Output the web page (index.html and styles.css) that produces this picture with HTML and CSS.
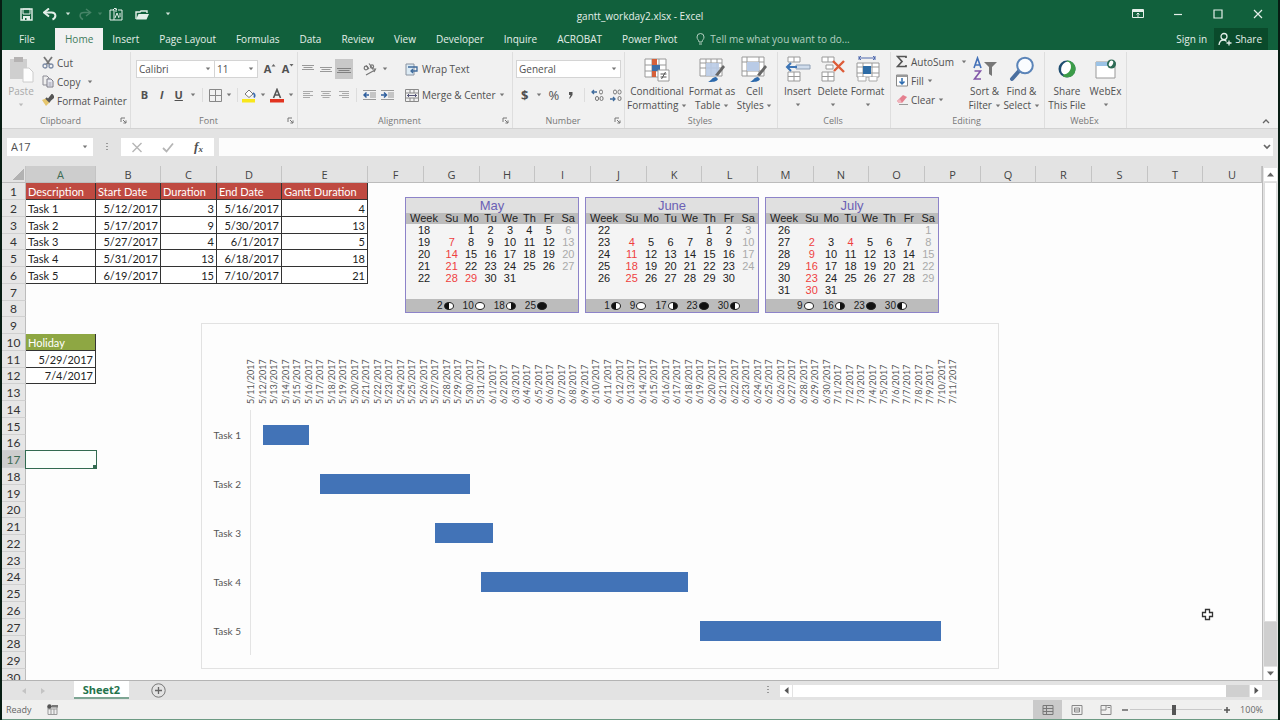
FILE: index.html
```html
<!DOCTYPE html>
<html lang="en">
<head>
<meta charset="utf-8">
<title>gantt_workday2.xlsx - Excel</title>
<link rel="stylesheet" href="styles.css">
</head>
<body>
<svg class="defs" aria-hidden="true">
  <symbol id="caret" viewBox="0 0 6 4"><path d="M0.8 0.5h4.4L3 3.2z" fill="currentColor"/></symbol>
  <symbol id="launcher" viewBox="0 0 7 7"><path d="M1 5V1h4M3 3l3 3M6 3.4V6H3.4" fill="none" stroke="#777"/></symbol>
</svg>
<div class="window">
  <header class="titlebar">
    <div class="quick">
      <button class="q" aria-label="Save"><svg width="13" height="13" viewBox="0 0 13 13"><path d="M1 1h11v11H1z" fill="none" stroke="currentColor" stroke-width="1.4"/><path d="M3 1h7v5H3z" fill="none" stroke="currentColor"/><path d="M3 8h7v4H3z" fill="currentColor"/><path d="M5 10h1.500v2H5z" fill="#11603c"/></svg></button>
      <button class="q" aria-label="Undo"><svg width="14" height="13" viewBox="0 0 14 13"><path d="M2 4.500h6.500c5 0 5 5.500 1 7" fill="none" stroke="currentColor" stroke-width="2"/><path d="M6 0.500L1 4.500l5 4" fill="none" stroke="currentColor" stroke-width="2"/></svg></button>
      <button class="q arrow" aria-label="Undo history"><svg class="caret"><use href="#caret"/></svg></button>
      <button class="q dim" aria-label="Redo"><svg width="14" height="13" viewBox="0 0 14 13"><path d="M12 4.500H6c-5 0-5 5-1 7" fill="none" stroke="currentColor" stroke-width="1.500"/><path d="M8 1l4.500 3.500L8 8" fill="none" stroke="currentColor" stroke-width="1.500"/></svg></button>
      <button class="q arrow dim" aria-label="Redo history"><svg class="caret"><use href="#caret"/></svg></button>
      <button class="q" aria-label="Paste special"><svg width="14" height="14" viewBox="0 0 14 14"><path d="M1 3h4v10H1zM5 13h8V3H9" fill="none" stroke="currentColor"/><path d="M4 3l2-2 2 2M7 1v4M6 11l2-5 2 5M11 6v4" fill="none" stroke="currentColor"/></svg></button>
      <button class="q" aria-label="Open"><svg width="14" height="11" viewBox="0 0 14 11"><path d="M1 10V3h4l1-1h6v2" fill="none" stroke="currentColor" stroke-width="1.400"/><path d="M3.500 5H14l-2.500 5.500H1z" fill="currentColor"/></svg></button>
      <button class="q arrow" aria-label="Customize toolbar"><svg class="caret"><use href="#caret"/></svg></button>
    </div>
    <h1 class="doc">gantt_workday2.xlsx - Excel</h1>
    <div class="winctl">
      <button aria-label="Ribbon display options"><svg width="12" height="10" viewBox="0 0 12 10"><path d="M.5.500h11v8H.5z" fill="none" stroke="currentColor"/><path d="M1 1h10v2H1z" fill="currentColor"/><path d="M6 8V4M4.500 5.500L6 4l1.500 1.500" fill="none" stroke="currentColor"/></svg></button>
      <button aria-label="Minimize"><svg width="10" height="10" viewBox="0 0 10 10"><path d="M1 5.500h8" stroke="currentColor" stroke-width="1.200"/></svg></button>
      <button aria-label="Maximize"><svg width="10" height="10" viewBox="0 0 10 10"><path d="M1 1h8v8H1z" fill="none" stroke="currentColor" stroke-width="1.200"/></svg></button>
      <button aria-label="Close"><svg width="10" height="10" viewBox="0 0 10 10"><path d="M1 1l8 8M9 1L1 9" stroke="currentColor" stroke-width="1.200"/></svg></button>
    </div>
  </header>
  <nav class="tabs">
    <button class="tab file">File</button>
    <button class="tab active">Home</button>
    <button class="tab">Insert</button>
    <button class="tab">Page Layout</button>
    <button class="tab">Formulas</button>
    <button class="tab">Data</button>
    <button class="tab">Review</button>
    <button class="tab">View</button>
    <button class="tab">Developer</button>
    <button class="tab">Inquire</button>
    <button class="tab">ACROBAT</button>
    <button class="tab">Power Pivot</button>
    <button class="tell"><svg width="9" height="13" viewBox="0 0 9 13"><path d="M3 9C3 7 1 6.500 1 4a3.500 3.500 0 0 1 7 0C8 6.500 6 7 6 9zM3 11h3" fill="none" stroke="currentColor"/></svg>Tell me what you want to do...</button>
    <button class="signin">Sign in</button>
    <button class="share"><svg width="14" height="14" viewBox="0 0 14 14"><circle cx="6" cy="4.500" r="3" fill="none" stroke="currentColor" stroke-width="1.300"/><path d="M1 13c.3-3 2-5 4.500-5 1.500 0 2.500.6 3 1.500M8.500 11h5M11 8.500v5" fill="none" stroke="currentColor" stroke-width="1.300"/></svg>Share</button>
  </nav>

  <section class="ribbon">
    <div class="group g-clip">
      <div class="body">
        <button class="big off"><svg width="26" height="27" viewBox="0 0 26 27"><path d="M2 3h17v20H2z" fill="#cfcfcf"/><path d="M6 1h9v5H6z" fill="#b5b3b3"/><path d="M15 12h6l4 4v10H15z" fill="#fdfdfd" stroke="#ccc"/></svg><span>Paste</span><svg class="caret"><use href="#caret"/></svg></button>
        <div class="stack">
          <button class="sm"><svg width="12" height="13" viewBox="0 0 12 13"><path d="M2 1l6 8M10 1L4 9" stroke="#777" stroke-width="1.800"/><circle cx="3" cy="10" r="2" fill="none" stroke="#7d8ca6" stroke-width="1.300"/><circle cx="9" cy="10" r="2" fill="none" stroke="#7d8ca6" stroke-width="1.300"/></svg>Cut</button>
          <button class="sm"><svg width="12" height="13" viewBox="0 0 12 13"><path d="M1 1h4l2 2v7H1z" fill="#eee" stroke="#8b8b94"/><path d="M5 4h4l2 2v6H5z" fill="#e8eaf2" stroke="#7d7d88"/><path d="M6.500 8h3M6.500 10h3" stroke="#99a"/></svg>Copy<svg class="caret far"><use href="#caret"/></svg></button>
          <button class="sm"><svg width="12" height="13" viewBox="0 0 12 13"><path d="M0 6l5-2 3 4-4 4z" fill="#e6c66e"/><path d="M4 4l4 4M6 6l4-5 1.500 2L7 7" stroke="#555" stroke-width="2" fill="#555"/></svg>Format Painter</button>
        </div>
      </div>
      <div class="cap">Clipboard<svg class="launch"><use href="#launcher"/></svg></div>
    </div>

    <div class="group g-font">
      <div class="rows">
        <div class="row">
          <label class="pick face"><select aria-label="Font"><option>Calibri</option></select><svg class="caret"><use href="#caret"/></svg></label>
          <label class="pick size"><select aria-label="Font size"><option>11</option></select><svg class="caret"><use href="#caret"/></svg></label>
          <button class="ic first" aria-label="Increase font size"><b class="gl">A</b><svg width="5" height="12" viewBox="0 0 5 12"><path d="M.5 3.500l2-2.500 2 2.500z" fill="#666"/></svg></button>
          <button class="ic" aria-label="Decrease font size"><b class="gl">A</b><svg width="5" height="12" viewBox="0 0 5 12"><path d="M.5 1l2 2.500 2-2.500z" fill="#666"/></svg></button>
        </div>
        <div class="row">
          <button class="ic"><b class="gl">B</b></button>
          <button class="ic"><b class="gl"><i>I</i></b></button>
          <button class="ic"><b class="gl"><u>U</u></b></button>
          <button class="dd" aria-label="Underline style"><svg class="caret"><use href="#caret"/></svg></button>
          <i class="bar"></i>
          <button class="ic" aria-label="Borders"><svg width="13" height="13" viewBox="0 0 13 13"><path d="M.5.500h12v12H.5zM6.500.500v12M.5 6.500h12" fill="none" stroke="#888"/></svg></button>
          <button class="dd" aria-label="Border style"><svg class="caret"><use href="#caret"/></svg></button>
          <i class="bar"></i>
          <button class="ic" aria-label="Fill color"><svg width="14" height="15" viewBox="0 0 14 15"><path d="M3 6l4-4 4 4-4 3.500z" fill="#fff" stroke="#777"/><path d="M11 5c2 1 2 3 1 4.500" fill="none" stroke="#3c6db0" stroke-width="1.800"/><path d="M0 11h13v3.500H0z" fill="#f8e71c"/></svg></button>
          <button class="dd" aria-label="Fill choices"><svg class="caret"><use href="#caret"/></svg></button>
          <button class="ic" aria-label="Font color"><svg width="14" height="15" viewBox="0 0 14 15"><path d="M3.500 10L7 1.500l3.500 8.500M4.800 7h4.400" fill="none" stroke="#555" stroke-width="1.600"/><path d="M0 11h14v3.500H0z" fill="#e23420"/></svg></button>
          <button class="dd" aria-label="Color choices"><svg class="caret"><use href="#caret"/></svg></button>
        </div>
      </div>
      <div class="cap">Font<svg class="launch"><use href="#launcher"/></svg></div>
    </div>

    <div class="group g-align">
      <div class="rows">
        <div class="row">
          <div class="seg">
            <button class="ic" aria-label="Top align"><svg width="12" height="12" viewBox="0 0 12 12"><path d="M0 2.500h12M1.500 4.500h9M0 6.500h12" stroke="#999"/></svg></button>
            <button class="ic" aria-label="Middle align"><svg width="12" height="12" viewBox="0 0 12 12"><path d="M0 4.500h12M1.500 6.500h9M0 8.500h12" stroke="#999"/></svg></button>
            <button class="ic on" aria-label="Bottom align"><svg width="14" height="14" viewBox="0 0 14 14"><path d="M0 6.500h14M1.500 8.500h11M0 10.500h14" stroke="#808080"/></svg></button>
            <button class="ic gap" aria-label="Orientation"><svg width="14" height="13" viewBox="0 0 14 13"><circle cx="3" cy="5" r="1.800" fill="none" stroke="#777" stroke-width="1.200"/><path d="M3 2.500l3 3.500M6 .500l4 5.500" stroke="#777" stroke-width="1.200"/><circle cx="9" cy="3.500" r="1.600" fill="none" stroke="#777" stroke-width="1.200"/><path d="M3 12l9-5M9 6h3.500L11 9" fill="none" stroke="#777" stroke-width="1.200"/></svg></button>
            <button class="dd" aria-label="Orientation choices"><svg class="caret"><use href="#caret"/></svg></button>
          </div>
          <button class="sm"><svg width="14" height="13" viewBox="0 0 14 13"><path d="M1 1h8v11H1z" fill="#dcebf5" stroke="#8a93a0"/><path d="M3 4h9v4H6M8 6L6 8l2 2" fill="none" stroke="#3f6b9c" stroke-width="1.300"/></svg>Wrap Text</button>
        </div>
        <div class="row">
          <div class="seg">
            <button class="ic" aria-label="Align left"><svg width="12" height="10" viewBox="0 0 12 10"><path d="M1 1.500h10M1 3.500h7M1 5.500h10M1 7.500h7" stroke="#aaa"/></svg></button>
            <button class="ic" aria-label="Center"><svg width="12" height="10" viewBox="0 0 12 10"><path d="M1 1.500h10M2.500 3.500h7M1 5.500h10M2.500 7.500h7" stroke="#aaa"/></svg></button>
            <button class="ic" aria-label="Align right"><svg width="12" height="10" viewBox="0 0 12 10"><path d="M1 1.500h10M4 3.500h7M1 5.500h10M4 7.500h7" stroke="#aaa"/></svg></button>
            <i class="bar"></i>
            <button class="ic" aria-label="Decrease indent"><svg width="13" height="12" viewBox="0 0 13 12"><path d="M0 1.500h13M7 4h6M7 6h6M7 8h6M0 10.500h13" stroke="#999"/><path d="M6 6H1M3.500 3.500L1 6l2.500 2.500" fill="none" stroke="#2f5f9e" stroke-width="1.500"/></svg></button>
            <button class="ic" aria-label="Increase indent"><svg width="13" height="12" viewBox="0 0 13 12"><path d="M0 1.500h13M7 4h6M7 6h6M7 8h6M0 10.500h13" stroke="#999"/><path d="M0 6h5M3 3.500L5.500 6 3 8.500" fill="none" stroke="#2f5f9e" stroke-width="1.500"/></svg></button>
          </div>
          <button class="sm"><svg width="14" height="13" viewBox="0 0 14 13"><path d="M.5.500h13v12H.5zM.5 4h13M.5 9h13M5 .5V4M9 .5V4M5 9v3.500M9 9v3.500" fill="none" stroke="#888"/><path d="M2 6.500h10M4 5L2.500 6.500 4 8M10 5l1.500 1.500L10 8" fill="none" stroke="#557"/></svg>Merge &amp; Center<svg class="caret"><use href="#caret"/></svg></button>
        </div>
      </div>
      <div class="cap">Alignment<svg class="launch"><use href="#launcher"/></svg></div>
    </div>

    <div class="group g-num">
      <div class="rows">
        <div class="row"><label class="pick fmt"><select aria-label="Number format"><option>General</option></select><svg class="caret"><use href="#caret"/></svg></label></div>
        <div class="row">
          <button class="ic"><b class="sym">$</b></button>
          <button class="dd" aria-label="Currency choices"><svg class="caret"><use href="#caret"/></svg></button>
          <button class="ic"><span class="sym">%</span></button>
          <button class="ic" aria-label="Comma style"><svg width="6" height="8" viewBox="0 0 6 8"><path d="M1 1h3.500v3L2 7.500H1L2.500 4H1z" fill="#555"/></svg></button>
          <i class="bar"></i>
          <button class="ic" aria-label="Increase decimal"><svg width="13" height="13" viewBox="0 0 13 13"><path d="M6 3H1M3 1L1 3l2 2" fill="none" stroke="#3f6b9c" stroke-width="1.300"/><rect x="8.500" y="1" width="3" height="4" rx="1.500" fill="none" stroke="#777"/><rect x="4.500" y="7.500" width="3" height="4" rx="1.500" fill="none" stroke="#777"/><rect x="9" y="7.500" width="3" height="4" rx="1.500" fill="none" stroke="#777"/></svg></button>
          <button class="ic" aria-label="Decrease decimal"><svg width="13" height="13" viewBox="0 0 13 13"><path d="M1 10h5M4 8l2 2-2 2" fill="none" stroke="#3f6b9c" stroke-width="1.300"/><rect x="4.500" y="1" width="3" height="4" rx="1.500" fill="none" stroke="#777"/><rect x="9" y="1" width="3" height="4" rx="1.500" fill="none" stroke="#777"/><rect x="9" y="7.500" width="3" height="4" rx="1.500" fill="none" stroke="#777"/></svg></button>
        </div>
      </div>
      <div class="cap">Number<svg class="launch"><use href="#launcher"/></svg></div>
    </div>

    <div class="group g-styles">
      <div class="body">
        <button class="big w60"><svg width="26" height="27" viewBox="0 0 26 27"><path d="M1 3h21v18H1zM1 9h21M1 15h21M8 3v18M15 3v18" fill="#fff" stroke="#999"/><path d="M8 3h5v6H8zM8 15h4v6H8z" fill="#d5603a"/><path d="M8 9h8v6H8z" fill="#3b6ea8"/><path d="M14 14h11v11H14z" fill="#fff" stroke="#999"/><path d="M16.500 18h6M16.500 21h6M21.500 16l-4 7" stroke="#555"/></svg><span>Conditional<br>Formatting <svg class="caret"><use href="#caret"/></svg></span></button>
        <button class="big w50"><svg width="27" height="27" viewBox="0 0 27 27"><path d="M1 3h22v17H1zM1 7h22M1 12h22M7 3v17M12 3v17M18 3v17" fill="#fff" stroke="#999"/><path d="M7 7h13v13H7z" fill="#b9cbe6" fill-opacity=".9"/><path d="M24 9l2 2-7 9-3-1z" fill="#666"/><path d="M9 26c3-1 4-5 8-5l2 2c-1 3-6 3-10 3z" fill="#2c69ac"/></svg><span>Format as<br>Table <svg class="caret"><use href="#caret"/></svg></span></button>
        <button class="big w36"><svg width="27" height="27" viewBox="0 0 27 27"><path d="M1 1h22v19H1zM1 6h22M1 15h22M6 1v19M18 1v19" fill="#fff" stroke="#999"/><path d="M6 6h12v9H6z" fill="#b9cbe6"/><path d="M24 9l2 2-7 9-3-1z" fill="#666"/><path d="M9 26c3-1 4-5 8-5l2 2c-1 3-6 3-10 3z" fill="#2c69ac"/></svg><span>Cell<br>Styles <svg class="caret"><use href="#caret"/></svg></span></button>
      </div>
      <div class="cap">Styles</div>
    </div>

    <div class="group g-cells">
      <div class="body">
        <button class="big w35"><svg width="26" height="27" viewBox="0 0 26 27"><path d="M3 1h12v5H3zM9 1v5M3 16h12v9H3zM9 16v9M3 20.500h12" fill="#fff" stroke="#999"/><path d="M11 9h14v4H11z" fill="#cfdcec" stroke="#8fa0b5"/><path d="M12 11H2M6 7l-4 4 4 4" fill="none" stroke="#3d75b5" stroke-width="2"/></svg><span>Insert</span><svg class="caret"><use href="#caret"/></svg></button>
        <button class="big w35"><svg width="26" height="27" viewBox="0 0 26 27"><path d="M2 1h12v5H2zM8 1v5M2 16h12v9H2zM8 16v9M2 20.500h12M6 9h7v4H6z" fill="#fff" stroke="#999"/><path d="M13 5l11 11M24 5L14 15" stroke="#dd5c38" stroke-width="2.400"/></svg><span>Delete</span><svg class="caret"><use href="#caret"/></svg></button>
        <button class="big w35"><svg width="26" height="27" viewBox="0 0 26 27"><path d="M4 2h16M6 0L4 2l2 2M18 0l2 2-2 2M4 0v4M20 0v4" fill="none" stroke="#4f68ad"/><path d="M2 7h22v14H2zM2 11h22M2 17h22M8 7v14M17 7v14" fill="#fff" stroke="#999"/><path d="M8 10h8v8H8z" fill="#2d6ca6"/><path d="M3 21v4h8v-4M14 21v4h8v-4" fill="#fff" stroke="#aaa"/></svg><span>Format</span><svg class="caret"><use href="#caret"/></svg></button>
      </div>
      <div class="cap">Cells</div>
    </div>

    <div class="group g-edit">
      <div class="body">
        <div class="stack">
          <button class="sm"><svg width="12" height="13" viewBox="0 0 12 13"><path d="M10 3V1.500H1.500L6 6.500l-4.500 5H10V10" fill="none" stroke="#555" stroke-width="1.700"/></svg>AutoSum<svg class="caret far"><use href="#caret"/></svg></button>
          <button class="sm"><svg width="12" height="13" viewBox="0 0 12 13"><path d="M.5 1h11v11H.5z" fill="#fff" stroke="#888"/><path d="M.5 1h11v2H.5z" fill="#999"/><path d="M6 4v6M3.500 7.500L6 10l2.500-2.500" fill="none" stroke="#2d6cb0" stroke-width="1.500"/></svg>Fill<svg class="caret"><use href="#caret"/></svg></button>
          <button class="sm"><svg width="12" height="13" viewBox="0 0 12 13"><path d="M1 8l6-6 4 2-5 6H3z" fill="#e5808f"/><path d="M1 8l2 2h3l-2-4z" fill="#f0b4bc"/><path d="M3 11.500h9" stroke="#999"/></svg>Clear<svg class="caret"><use href="#caret"/></svg></button>
        </div>
        <button class="big w36"><svg width="26" height="27" viewBox="0 0 26 27"><path d="M2 12L5.500 2 9 12M3.500 9h4" fill="none" stroke="#4471b8" stroke-width="1.600"/><path d="M2.500 15H8.500l-6 8h6.500" fill="none" stroke="#8256a8" stroke-width="1.600"/><path d="M12 6h13l-5 5v9l-3-2v-7z" fill="#777"/></svg><span>Sort &amp;<br>Filter <svg class="caret"><use href="#caret"/></svg></span></button>
        <button class="big w36"><svg width="26" height="27" viewBox="0 0 26 27"><path d="M10 15l-7 8" stroke="#4a6f9f" stroke-width="4" stroke-linecap="round"/><circle cx="16" cy="9.500" r="7.800" fill="#fafcff" stroke="#5b84b8" stroke-width="2"/></svg><span>Find &amp;<br>Select <svg class="caret"><use href="#caret"/></svg></span></button>
      </div>
      <div class="cap">Editing</div>
    </div>

    <div class="group g-webex">
      <div class="body">
        <button class="big w40"><svg width="26" height="27" viewBox="0 0 26 27"><circle cx="13" cy="13" r="8.500" fill="#1f4d70"/><path d="M13 4.500a8.500 8.500 0 0 1 3 16.500c-2 .6-5 .5-7-.5z" fill="#3c9c48"/><ellipse cx="12" cy="12" rx="4.600" ry="6.500" fill="#fff" transform="rotate(25 12 12)"/></svg><span>Share<br>This File</span></button>
        <button class="big w36"><svg width="26" height="27" viewBox="0 0 26 27"><path d="M3 6h19v16H3z" fill="#fff" stroke="#999"/><path d="M3 6h19v4H3z" fill="#9cc3e6"/><circle cx="18.500" cy="8" r="4.500" fill="#2d6b55"/><ellipse cx="18" cy="7.500" rx="2" ry="3" fill="#fff" transform="rotate(25 18 7.500)"/></svg><span>WebEx</span><svg class="caret"><use href="#caret"/></svg></button>
      </div>
      <div class="cap">WebEx</div>
    </div>
    <button class="collapse" aria-label="Collapse ribbon"><svg width="8" height="6" viewBox="0 0 8 6"><path d="M1 5l3-3 3 3" fill="none" stroke="#666" stroke-width="1.300"/></svg></button>
  </section>

  <section class="formula">
    <div class="namebox"><input aria-label="Name box" value="A17"><svg class="caret"><use href="#caret"/></svg></div>
    <span class="dots"></span>
    <div class="fx">
      <button aria-label="Cancel"><svg width="12" height="11" viewBox="0 0 12 11"><path d="M1.500 1l9 9M10.500 1l-9 9" stroke="#b5b5b5" stroke-width="1.400"/></svg></button>
      <button aria-label="Enter"><svg width="12" height="11" viewBox="0 0 12 11"><path d="M1 6l3.500 3.500L11 1.500" fill="none" stroke="#b5b5b5" stroke-width="1.800"/></svg></button>
      <button class="fn"><i>f</i><small>x</small></button>
    </div>
    <div class="entry"><input aria-label="Formula bar"><svg width="8" height="6" viewBox="0 0 8 6"><path d="M1 1l3 3 3-3" fill="none" stroke="#666" stroke-width="1.700"/></svg></div>
  </section>

  <main class="work">
    <div class="sheet">
      <table class="grid" id="grid"></table>
      <div class="calendars" id="calendars"></div>
      <figure class="chart">
        <div class="dates" id="dates"></div>
        <div class="plot" id="plot"></div>
      </figure>
      <svg class="cursor" width="13" height="13" viewBox="0 0 13 13"><path d="M4.500 1.500h4v3h3v4h-3v3h-4v-3h-3v-4h3z" fill="#fff" stroke="#333" stroke-width="1.300"/></svg>
    </div>
    <div class="vscroll">
      <button aria-label="Scroll up"><svg width="7" height="5" viewBox="0 0 7 5"><path d="M0 4.500h7L3.500.500z" fill="#666"/></svg></button>
      <div class="track"><div class="thumb"></div></div>
      <button aria-label="Scroll down"><svg width="7" height="5" viewBox="0 0 7 5"><path d="M0 .5h7L3.500 4.500z" fill="#666"/></svg></button>
    </div>
  </main>

  <div class="sheetbar">
    <div class="nav"><button aria-label="Previous sheet"><svg width="4" height="6" viewBox="0 0 4 6"><path d="M4 0v6L0 3z" fill="#c4c4c4"/></svg></button><button aria-label="Next sheet"><svg width="4" height="6" viewBox="0 0 4 6"><path d="M0 0v6l4-3z" fill="#c4c4c4"/></svg></button></div>
    <button class="sheettab">Sheet2</button>
    <button class="add" aria-label="New sheet"><svg width="15" height="15" viewBox="0 0 15 15"><circle cx="7.500" cy="7.500" r="6.700" fill="none" stroke="#777"/><path d="M7.500 4v7M4 7.500h7" stroke="#666" stroke-width="1.300"/></svg></button>
    <span class="dots"></span>
    <div class="hscroll">
      <button aria-label="Scroll left"><svg width="5" height="7" viewBox="0 0 5 7"><path d="M4.500 0v7L.5 3.500z" fill="#555"/></svg></button>
      <div class="track"><div class="thumb"></div></div>
      <button aria-label="Scroll right"><svg width="5" height="7" viewBox="0 0 5 7"><path d="M.5 0v7l4-3.500z" fill="#555"/></svg></button>
    </div>
  </div>

  <footer class="status">
    <span class="ready">Ready</span>
    <button class="macro" aria-label="Record macro"><svg width="11" height="11" viewBox="0 0 11 11"><path d="M1 2.500h9v8H1zM1 5h9M4 5v5.500M7 5v5.500" fill="#eee" stroke="#999"/><circle cx="2.500" cy="2.500" r="2.200" fill="#555"/><path d="M5 1h6v2.500H5z" fill="#777"/></svg></button>
    <div class="views">
      <button class="on" aria-label="Normal view"><svg width="12" height="10" viewBox="0 0 12 10"><path d="M1 .5h10v9H1zM1 3.500h10M1 6.500h10M4.500.500v9" fill="none" stroke="#777"/></svg></button>
      <button aria-label="Page layout view"><svg width="12" height="10" viewBox="0 0 12 10"><path d="M1 .5h10v9H1zM3.500 3h5v4h-5zM3.500 5h5" fill="none" stroke="#888"/></svg></button>
      <button aria-label="Page break view"><svg width="12" height="10" viewBox="0 0 12 10"><path d="M1 .5h10v9H1zM1 5h5V.5M7.500 2.500H10" fill="none" stroke="#888"/></svg></button>
    </div>
    <button class="z" aria-label="Zoom out"><svg width="8" height="8" viewBox="0 0 8 8"><path d="M1 4h6" stroke="#666" stroke-width="1.500"/></svg></button>
    <input class="zoom" type="range" min="0" max="100" value="48" aria-label="Zoom">
    <button class="z" aria-label="Zoom in"><svg width="8" height="8" viewBox="0 0 8 8"><path d="M1 4h6M4 1v6" stroke="#555" stroke-width="1.500"/></svg></button>
    <span class="pct">100%</span>
  </footer>
</div>
<script src="app.js"></script>
</body>
</html>
```
FILE: styles.css
```css
* { box-sizing: border-box; }
body { margin: 0; font: 10px/14px "Open Sans", "Noto Sans", sans-serif; color: #505050; }
button { border: 0; padding: 0; margin: 0; background: none; font: inherit; color: inherit; white-space: nowrap; }
input, select { border: 0; margin: 0; padding: 0; background: none; font: inherit; color: inherit; outline: 0; }
select { appearance: none; }
svg { display: block; flex: none; }
.defs { position: absolute; width: 0; height: 0; }
.caret { width: 6px; height: 4px; color: #777; }
.window { height: 100vh; display: flex; flex-direction: column; border: solid #071d13; border-width: 0 2px; background: #e3e3e3; overflow: hidden; }

.titlebar { height: 28px; flex: none; background: #11603c; color: #e4efe9; display: grid; grid-template-columns: 1fr auto 1fr; align-items: center; }
.quick { display: flex; align-items: center; padding-left: 13px; gap: 2px; }
.q { width: 22px; height: 22px; display: grid; place-items: center; }
.q.arrow { width: 10px; }
.q.arrow .caret { color: #cfe2d8; }
.dim { opacity: .25; }
.quick .q:nth-child(4) { width: 20px; }
.quick .q:nth-child(5) { width: 6px; }
.quick .q:nth-child(7) { margin-left: 2px; }
.quick .q:nth-child(8) { margin-left: 8px; }
.doc { margin: 4px 0 0; font-size: 10px; font-weight: 400; line-height: 14px; }
.winctl { justify-self: end; display: flex; }
.winctl button { width: 40px; height: 28px; display: grid; place-items: center; }

.tabs { height: 22px; flex: none; background: #11603c; color: #e4efe9; display: flex; align-items: stretch; padding-right: 10px; }
.tab { padding: 0 10px; }
.tab.file { width: 50px; margin-right: 3px; }
.tab.active { background: #f1f1f1; color: #3f7a5c; margin-right: -1px; }
.tell { display: flex; align-items: center; gap: 5px; padding-left: 9px; color: #b4d0c1; }
.signin { margin-left: auto; padding: 0 7px; }
.share { display: flex; align-items: center; gap: 3px; padding: 0 6px 0 4px; background: #0a4a2b; }

.ribbon { height: 79px; flex: none; display: flex; background: #f1f1f1; border-bottom: 1px solid #d2d2d2; padding-top: 2px; }
.group { display: flex; flex-direction: column; border-right: 1px solid #dedede; flex: none; }
.body { flex: 1; display: flex; }
.rows { flex: 1; display: flex; flex-direction: column; gap: 6px; padding-top: 7px; }
.row, .seg { display: flex; align-items: center; height: 20px; }
.cap { height: 15px; font-size: 9px; line-height: 15px; text-align: center; color: #777; position: relative; padding-right: 11px; }
.g-styles .cap, .g-cells .cap, .g-edit .cap, .g-webex .cap { padding-right: 2px; }
.launch { position: absolute; right: 3px; top: 4px; width: 7px; height: 7px; }
.g-clip { width: 129px; }
.g-font { width: 167px; }
.g-align { width: 215px; }
.g-num { width: 112px; }
.g-styles { width: 153px; }
.g-cells { width: 113px; }
.g-edit { width: 154px; }
.g-webex { width: 82px; }
.big { display: flex; flex-direction: column; align-items: center; padding-top: 4px; width: 38px; line-height: 14px; }
.big span { display: block; margin-top: 1px; text-align: center; }
.big span .caret { display: inline-block; vertical-align: middle; }
.big > .caret { margin-top: 5px; }
.big.off { color: #aaa; }
.big.off .caret { color: #bbb; }
.w60 { width: 62px; }
.w50 { width: 48px; }
.w40 { width: 40px; }
.w36 { width: 37px; }
.w35 { width: 35px; }
.stack { display: flex; flex-direction: column; }
.sm { display: flex; align-items: center; gap: 3px; height: 19px; }
.sm .far { margin-left: 4px; }
.g-clip .stack { padding: 1px 0 0 2px; }
.g-styles .body { padding-left: 1px; }
.g-cells .body { padding-left: 2px; }
.g-edit .stack { width: 75px; padding-left: 5px; }
.g-webex .body { padding-left: 2px; }
.ic { width: 18px; height: 20px; display: flex; align-items: center; justify-content: center; }
.ic.on { background: #c8c8c8; }
.ic.gap { margin-left: 8px; }
.ic.first { margin-left: 3px; }
.gl { font-size: 11px; }
.sym { font-size: 13px; }
.dd { width: 12px; height: 20px; display: grid; place-items: center; }
.bar { width: 1px; height: 14px; background: #ddd; margin: 0 3px; }
.g-font .rows { padding-left: 5px; }
.g-font .bar { margin: 0 2px; }
.g-font .bar:first-of-type { margin: 0 4px 0 3px; }
.g-align .rows { padding-left: 1px; }
.g-align .seg { width: 106px; }
.g-num .rows { padding-left: 3px; }
.g-num .bar { margin: 0 4px; }
.pick { display: flex; align-items: center; height: 18px; background: #fff; border: 1px solid #d4d4d4; padding: 0 3px 0 2px; }
.pick select { flex: 1; min-width: 0; }
.face { width: 79px; }
.size { width: 43px; border-left: 0; }
.fmt { width: 105px; }
.collapse { margin: auto 8px 4px auto; }

.formula { height: 37px; flex: none; display: flex; padding: 9px 5px 10px; font-size: 11px; }
.namebox { width: 86px; background: #fff; display: flex; align-items: center; padding: 0 5px 0 4px; }
.namebox input { flex: 1; min-width: 0; }
.dots { width: 2px; height: 9px; align-self: center; background: repeating-linear-gradient(#999 0 1px, transparent 1px 3px); margin: 0 13px; }
.fx { width: 93px; background: #fff; display: flex; }
.fx button { flex: 1; display: grid; place-items: center; }
.fx .fn { display: flex; align-items: center; justify-content: center; font: bold 13px/16px "Liberation Serif", serif; }
.fx small { font-size: 9px; font-style: italic; padding-top: 3px; }
.entry { flex: 1; margin-left: 5px; background: #fcfcfc; display: flex; align-items: center; padding-right: 2px; }
.entry input { flex: 1; }

.work { flex: 1; min-height: 0; display: flex; }
.sheet { flex: 1; min-width: 0; position: relative; overflow: hidden; background: #fdfdfd; border-right: 1px solid #bbb; }
.grid { width: 100%; table-layout: fixed; border-spacing: 0; font: 11px/15px Lato, "Open Sans", sans-serif; color: #222; }
.grid tr { height: 17px; }
.grid tbody tr:nth-child(4n) { height: 16px; }
.grid tbody tr:nth-child(4n) > * { line-height: 14px; }
.grid th, .grid td { padding: 0; font-weight: 400; white-space: nowrap; }
.grid thead th { background: #e3e3e3; border-right: 1px solid #c4c4c4; border-bottom: 1px solid #bcbcbc; font: 11px/15px "Open Sans", sans-serif; color: #444; }
.grid tbody th { background: #e6e6e6; border-right: 1px solid #bcbcbc; border-bottom: 1px solid #d0d0d0; font-size: 12px; color: #333; }
.grid .sel, .grid thead .sel { background: #cdcdcd; color: #3d6b53; }
.grid thead .corner { background: linear-gradient(135deg, transparent 50%, #b2b2b2 50%) 11px 3px / 11px 11px no-repeat #e3e3e3; }
.grid .cell { border-right: 1px solid #333; border-bottom: 1px solid #333; padding: 0 2px; background: #fff; }
.grid .num { text-align: right; }
.grid .red { background: #bf4a41; color: #fff; }
.grid .green { background: #8ea743; color: #fff; }
.grid .cur { outline: 1px solid #326b51; background: linear-gradient(#326b51, #326b51) right bottom / 3px 3px no-repeat #fafffc; }
.c-row { width: 24px; }
.c-a { width: 70px; }
.c-b { width: 65px; }
.c-c { width: 56px; }
.c-d { width: 65px; }
.c-e { width: 86px; }
.c-n { width: 56px; }
.c-m { width: 55px; }

.calendars { position: absolute; left: 403px; top: 31px; display: flex; gap: 6px; }
.cal { width: 174px; height: 116px; display: flex; flex-direction: column; border: 1px solid #8d83c9; background: #f4f4f4; font: 11px/12px "Liberation Sans", Arial, sans-serif; color: #222; }
.cal table { border-spacing: 0; table-layout: fixed; width: 100%; }
.cal caption { font-size: 13px; line-height: 15px; color: #6b61b5; background: #e0e0e0; }
.cal th, .cal td { padding: 0; font-weight: 400; text-align: center; }
.cal th { background: #bcbcbc; line-height: 11px; }
.cal .wk { width: 36px; }
.cal .sun { color: #ef3f3f; }
.cal .sat { color: #aaa; }
.moons { margin-top: auto; height: 13px; background: #bcbcbc; display: flex; justify-content: center; gap: 9px; font-size: 10px; line-height: 13px; }
.moons span { display: flex; align-items: center; gap: 1px; }
.moon { width: 10px; height: 8px; border-radius: 50%; border: 1px solid #222; background: #fff; }
.moon.last { background: linear-gradient(90deg, #111 50%, #fff 50%); }
.moon.firstq { background: linear-gradient(90deg, #fff 50%, #111 50%); }
.moon.new { background: #111; }

.chart { position: absolute; left: 199px; top: 157px; width: 798px; margin: 0; padding: 34px 39px 13px 43px; border: 1px solid #e2e2e2; background: #fdfdfd; font: 9px/12px Lato, "Open Sans", sans-serif; color: #555; }
.dates { display: grid; grid-template-columns: repeat(62, 1fr); height: 46px; }
.dates span { writing-mode: vertical-rl; transform: rotate(180deg); white-space: nowrap; line-height: 11px; }
.plot { margin: 6px 6px 0 5px; border-left: 1px solid #e4e4e4; }
.task { height: 49px; display: flex; align-items: center; position: relative; }
.task span { position: absolute; right: 100%; margin-right: 10px; white-space: nowrap; font-size: 10px; }
.span { height: 20px; background: #4273b7; }
.cursor { position: absolute; left: 1199px; top: 442px; }

.vscroll { width: 15px; flex: none; display: flex; flex-direction: column; padding: 2px 1px 0; }
.vscroll button { height: 13px; background: #fff; display: grid; place-items: center; }
.vscroll .track { flex: 1; margin: 1px 0; background: #cfcfcf; }
.vscroll .thumb { height: 91%; background: #fff; border: 1px solid #ddd; }

.sheetbar { height: 20px; flex: none; display: flex; align-items: center; border-top: 1px solid #b4b4b4; padding-right: 16px; }
.nav { width: 72px; display: flex; gap: 15px; padding-left: 20px; }
.sheettab { align-self: flex-start; width: 55px; height: 18px; background: #fff; border-bottom: 2px solid #7da593; font-weight: 700; font-size: 11px; line-height: 15px; color: #24734b; }
.add { margin: 0 auto 0 22px; }
.hscroll { width: 482px; height: 12px; display: flex; margin-left: -2px; }
.hscroll button { width: 12px; background: #fff; display: grid; place-items: center; }
.hscroll .track { flex: 1; margin: 0 1px; background: #d0d0d0; }
.hscroll .thumb { width: 95%; height: 100%; background: #fff; }

.status { height: 20px; flex: none; background: #f0f0ef; border-bottom: 1px solid #6c9a83; display: flex; align-items: center; font-size: 9px; padding: 0 15px 0 4px; color: #666; }
.macro { margin-left: 15px; }
.views { margin-left: auto; display: flex; align-self: stretch; }
.views button { width: 29px; display: grid; place-items: center; }
.views .on { background: #cacaca; }
.z { margin: 0 1px; }
.zoom { appearance: none; width: 92px; height: 12px; background: linear-gradient(#c9c9c9, #c9c9c9) center / 100% 1px no-repeat; }
.zoom::-webkit-slider-thumb { appearance: none; width: 4px; height: 10px; background: #555; border: 0; }
.pct { margin-left: 8px; }
```
FILE: app.js
```js
const el = (tag, cls, text) => {
  const node = document.createElement(tag);
  if (cls) node.className = cls;
  if (text !== undefined) node.textContent = text;
  return node;
};

const columns = 'ABCDEFGHIJKLMNOPQRSTU'.split('');
const cells = {
  1: ['Description', 'Start Date', 'Duration', 'End Date', 'Gantt Duration'],
  2: ['Task 1', '5/12/2017', '3', '5/16/2017', '4'],
  3: ['Task 2', '5/17/2017', '9', '5/30/2017', '13'],
  4: ['Task 3', '5/27/2017', '4', '6/1/2017', '5'],
  5: ['Task 4', '5/31/2017', '13', '6/18/2017', '18'],
  6: ['Task 5', '6/19/2017', '15', '7/10/2017', '21'],
  10: ['Holiday'],
  11: ['5/29/2017'],
  12: ['7/4/2017']
};

const grid = document.getElementById('grid');
const group = el('colgroup');
group.append(el('col', 'c-row'));
columns.forEach((c, i) => {
  const wide = ['c-a', 'c-b', 'c-c', 'c-d', 'c-e'][i];
  group.append(el('col', wide || (c === 'U' ? '' : i % 3 === 1 ? 'c-m' : 'c-n')));
});
const head = el('tr');
head.append(el('th', 'corner'));
columns.forEach(c => head.append(el('th', c === 'A' ? 'sel' : '', c)));
const thead = el('thead');
thead.append(head);
const tbody = el('tbody');
for (let r = 1; r <= 30; r++) {
  const tr = el('tr');
  tr.append(el('th', r === 17 ? 'sel' : '', r));
  columns.forEach((c, i) => {
    const value = (cells[r] || [])[i];
    let cls = '';
    if (value !== undefined) {
      cls = 'cell';
      if (r === 1) cls += ' red';
      else if (r === 10) cls += ' green';
      else if (/^\d/.test(value)) cls += ' num';
    }
    if (r === 17 && c === 'A') cls = 'cur';
    tr.append(el('td', cls, value));
  });
  tbody.append(tr);
}
grid.append(group, thead, tbody);

const months = [
  { name: 'May', first: 1, days: 31, week: 18, rows: 5, off: [29], moons: [[2, 'last'], [10, 'full'], [18, 'firstq'], [25, 'new']] },
  { name: 'June', first: 4, days: 30, week: 22, rows: 5, off: [], moons: [[1, 'last'], [9, 'full'], [17, 'firstq'], [23, 'new'], [30, 'last']] },
  { name: 'July', first: 6, days: 31, week: 26, rows: 6, off: [4], moons: [[9, 'full'], [16, 'firstq'], [23, 'new'], [30, 'last']] }
];
months.forEach(m => {
  const cal = el('div', 'cal');
  const table = el('table');
  table.append(el('caption', '', m.name));
  const hr = el('tr');
  ['Week', 'Su', 'Mo', 'Tu', 'We', 'Th', 'Fr', 'Sa'].forEach((d, i) => hr.append(el('th', i === 0 ? 'wk' : '', d)));
  table.append(hr);
  for (let w = 0; w < m.rows; w++) {
    const tr = el('tr');
    tr.append(el('td', '', m.week + w));
    for (let d = 0; d < 7; d++) {
      const day = w * 7 + d - m.first + 1;
      const shown = day > 0 && day <= m.days;
      tr.append(el('td', d === 0 || m.off.includes(day) ? 'sun' : d === 6 ? 'sat' : '', shown ? day : ''));
    }
    table.append(tr);
  }
  const moons = el('div', 'moons');
  m.moons.forEach(([day, phase]) => {
    const s = el('span', '', day);
    s.append(el('i', 'moon ' + phase));
    moons.append(s);
  });
  cal.append(table, moons);
  document.getElementById('calendars').append(cal);
});

const total = 61;
const dates = document.getElementById('dates');
for (let i = 0; i <= total; i++) {
  const d = new Date(2017, 4, 11 + i);
  dates.append(el('span', '', `${d.getMonth() + 1}/${d.getDate()}/2017`));
}
const plot = document.getElementById('plot');
[[1, 4], [6, 13], [16, 5], [20, 18], [39, 21]].forEach(([start, len], i) => {
  const row = el('div', 'task');
  row.append(el('span', '', 'Task ' + (i + 1)));
  const bar = el('div', 'span');
  bar.style.marginLeft = start / total * 100 + '%';
  bar.style.width = len / total * 100 + '%';
  row.append(bar);
  plot.append(row);
});
```
